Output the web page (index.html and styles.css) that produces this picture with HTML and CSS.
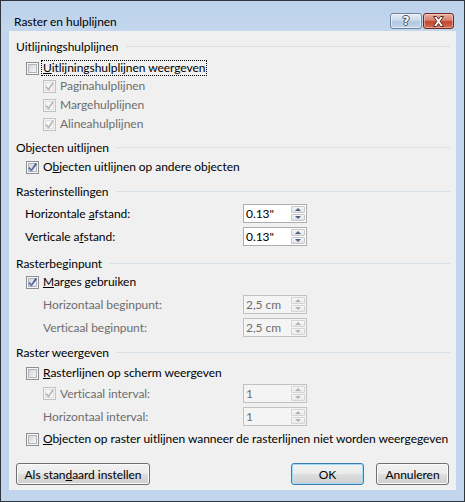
FILE: index.html
```html
<!DOCTYPE html>
<html lang="nl">
<head>
<meta charset="utf-8">
<title>Raster en hulplijnen</title>
<link rel="stylesheet" href="styles.css">
</head>
<body>
<div class="window">
  <div class="titlebar">
    <span class="title">Raster en hulplijnen</span>
    <div class="caption-buttons">
      <span class="cap-btn help">?</span>
      <span class="cap-btn close">
        <svg width="13" height="11" viewBox="0 0 13 11"><path d="M1.5 0.5 L4.6 0.5 L6.5 3.2 L8.4 0.5 L11.5 0.5 L8.2 5.3 L11.7 10.5 L8.5 10.5 L6.5 7.5 L4.5 10.5 L1.3 10.5 L4.8 5.3 Z" fill="#fff" stroke="#5a2a22" stroke-width="1" stroke-linejoin="round"/></svg>
      </span>
    </div>
  </div>
  <div class="client">
    <div class="group-head"><span>Uitlijningshulplijnen</span><i class="rule"></i></div>
    <div class="check ind1 mt4"><svg class="cb"><use href="#cb-off"/></svg><span class="lbl focus"><u>U</u>itlijningshulplijnen weergeven</span></div>
    <div class="check ind2 dis"><svg class="cb"><use href="#cb-dis-on"/></svg><span class="lbl">Paginahulplijnen</span></div>
    <div class="check ind2 dis mt1"><svg class="cb"><use href="#cb-dis-on"/></svg><span class="lbl">Margehulplijnen</span></div>
    <div class="check ind2 dis mt1"><svg class="cb"><use href="#cb-dis-on"/></svg><span class="lbl">Alineahulplijnen</span></div>

    <div class="group-head mt5"><span>Objecten uitlijnen</span><i class="rule"></i></div>
    <div class="check ind1 mt2"><svg class="cb"><use href="#cb-on"/></svg><span class="lbl">O<u>b</u>jecten uitlijnen op andere objecten</span></div>

    <div class="group-head mt6"><span>Rasterinstellingen</span><i class="rule"></i></div>
    <div class="field mt4">
      <span class="field-label"><span>Horizontale <u>a</u>fstand:</span></span>
      <div class="spin"><span class="spin-val">0.13"</span><span class="spin-btns"><i class="up"></i><i class="down"></i></span></div>
    </div>
    <div class="field mt4">
      <span class="field-label"><span>Verticale a<u>f</u>stand:</span></span>
      <div class="spin"><span class="spin-val">0.13"</span><span class="spin-btns"><i class="up"></i><i class="down"></i></span></div>
    </div>

    <div class="group-head mt8"><span>Rasterbeginpunt</span><i class="rule"></i></div>
    <div class="check ind1 mt1"><svg class="cb"><use href="#cb-on"/></svg><span class="lbl"><u>M</u>arges gebruiken</span></div>
    <div class="field sub dis mt4">
      <span class="field-label"><span>Horizontaal beginpunt:</span></span>
      <div class="spin"><span class="spin-val">2,5 cm</span><span class="spin-btns"><i class="up"></i><i class="down"></i></span></div>
    </div>
    <div class="field sub dis mt4">
      <span class="field-label"><span>Verticaal beginpunt:</span></span>
      <div class="spin"><span class="spin-val">2,5 cm</span><span class="spin-btns"><i class="up"></i><i class="down"></i></span></div>
    </div>

    <div class="group-head mt6"><span>Raster weergeven</span><i class="rule"></i></div>
    <div class="check ind1 mt3"><svg class="cb"><use href="#cb-off"/></svg><span class="lbl"><u>R</u>asterlijnen op scherm weergeven</span></div>
    <div class="field sub dis mt2">
      <span class="field-label"><svg class="cb"><use href="#cb-dis-on"/></svg><span class="lbl">Verticaal interval:</span></span>
      <div class="spin"><span class="spin-val">1</span><span class="spin-btns"><i class="up"></i><i class="down"></i></span></div>
    </div>
    <div class="field sub dis mt4">
      <span class="field-label"><span>Horizontaal interval:</span></span>
      <div class="spin"><span class="spin-val">1</span><span class="spin-btns"><i class="up"></i><i class="down"></i></span></div>
    </div>
    <div class="check ind1 mt4"><svg class="cb"><use href="#cb-off"/></svg><span class="lbl"><u>O</u>bjecten op raster uitlijnen wanneer de rasterlijnen niet worden weergegeven</span></div>

    <div class="buttons">
      <span class="btn wide">Als stan<u>d</u>aard instellen</span>
      <span class="btn default push">OK</span>
      <span class="btn">Annuleren</span>
    </div>
  </div>
</div>

<svg class="defs" width="0" height="0" aria-hidden="true">
  <defs>
    <linearGradient id="cbfill" x1="0" y1="0" x2="1" y2="1">
      <stop offset="0" stop-color="#cfd3d8"/>
      <stop offset="1" stop-color="#f8f8f8"/>
    </linearGradient>
    <linearGradient id="cbcheck" x1="0" y1="0" x2="0" y2="1">
      <stop offset="0" stop-color="#3b4f8f"/>
      <stop offset="1" stop-color="#6878b8"/>
    </linearGradient>
    <symbol id="cb-off" viewBox="0 0 13 13">
      <rect x="0.5" y="0.5" width="12" height="12" fill="#f6f6f6" stroke="#8e8f8f"/>
      <rect x="2.5" y="2.5" width="8" height="8" fill="url(#cbfill)" stroke="#b2b6bc"/>
    </symbol>
    <symbol id="cb-on" viewBox="0 0 13 13">
      <rect x="0.5" y="0.5" width="12" height="12" fill="#f6f6f6" stroke="#8e8f8f"/>
      <rect x="2.5" y="2.5" width="8" height="8" fill="url(#cbfill)" stroke="#b2b6bc"/>
      <path d="M3 6.6 L5.4 9.6 L10.2 2.6" fill="none" stroke="url(#cbcheck)" stroke-width="1.8" stroke-linejoin="round"/>
    </symbol>
    <symbol id="cb-dis-on" viewBox="0 0 13 13">
      <rect x="0.5" y="0.5" width="12" height="12" fill="#f4f4f4" stroke="#c2c2c2"/>
      <rect x="2.5" y="2.5" width="8" height="8" fill="#f4f4f4" stroke="#e0e0e0"/>
      <path d="M3 6.6 L5.4 9.6 L10.2 2.6" fill="none" stroke="#b0b0b0" stroke-width="1.5" stroke-linejoin="round"/>
    </symbol>
  </defs>
</svg>
</body>
</html>
```

FILE: styles.css
```css
html, body {
  margin: 0;
  padding: 0;
  background: #2b2f33;
}

body {
  font-family: Lato, "Noto Sans", sans-serif;
  font-size: 12px;
  letter-spacing: -0.05px;
  color: #000;
}

.window {
  box-sizing: border-box;
  width: 465px;
  height: 502px;
  border: 1px solid #30353b;
  background: #c1d5ec;
  padding: 0 8px 11px 8px;
  display: flex;
  flex-direction: column;
}

.titlebar {
  height: 30px;
  display: flex;
  justify-content: space-between;
  align-items: flex-start;
  margin: 0 -8px;
  padding: 0 10px 0 13px;
  background: linear-gradient(#bcd2ea, #c3d7ee);
}

.title {
  padding-top: 13px;
  line-height: 16px;
  font-size: 12px;
}

.caption-buttons {
  display: flex;
  gap: 1px;
  padding-top: 12px;
}

.cap-btn {
  box-sizing: border-box;
  height: 16px;
  border-radius: 3px;
  display: flex;
  align-items: center;
  justify-content: center;
}

.help {
  width: 32px;
  border: 1px solid #6f829b;
  background: linear-gradient(#e6eef8 0%, #cad9ec 45%, #b2c7e0 55%, #c3d6ec 100%);
  box-shadow: inset 0 0 0 1px rgba(255,255,255,0.55);
  color: #fff;
  font-family: "DejaVu Sans", sans-serif;
  font-weight: bold;
  font-size: 12px;
  line-height: 14px;
  text-shadow: 1px 0 0 #3d4e63, -1px 0 0 #3d4e63, 0 1px 0 #3d4e63, 0 -1px 0 #3d4e63;
}

.close {
  width: 31px;
  border: 1px solid #6e2a22;
  background: linear-gradient(#eab0a2 0%, #d9806c 45%, #c3442c 55%, #d4705a 100%);
  box-shadow: inset 0 0 0 1px rgba(255,220,210,0.5);
}

.close svg {
  display: block;
}

.client {
  flex: 1;
  background: #f0f0f0;
  padding: 6px 6px 0 7px;
  display: flex;
  flex-direction: column;
}

.group-head {
  height: 18px;
  display: flex;
  align-items: center;
  gap: 8px;
}

.rule {
  flex: 1;
  border-top: 1px solid #d5dfe5;
  margin-top: 1px;
}

.check {
  height: 18px;
  display: flex;
  align-items: center;
}

.ind1 { margin-left: 10px; }
.ind2 { margin-left: 27px; }

.cb {
  width: 13px;
  height: 13px;
  flex: none;
  display: block;
}

.lbl {
  margin-left: 2px;
  padding: 0 1px;
  border: 1px dotted transparent;
  line-height: 14px;
  white-space: nowrap;
}

.lbl.focus {
  border-color: #000;
}

.dis {
  color: #6d6d6d;
}

.mt1 { margin-top: 1px; }
.mt2 { margin-top: 2px; }
.mt3 { margin-top: 3px; }
.mt4 { margin-top: 4px; }
.mt5 { margin-top: 5px; }
.mt6 { margin-top: 6px; }
.mt8 { margin-top: 8px; }

.field {
  height: 19px;
  width: 291px;
  display: grid;
  grid-template-columns: 1fr 64px;
  align-items: center;
}

.field-label {
  padding-left: 9px;
  display: flex;
  align-items: center;
  white-space: nowrap;
}

.field.sub .field-label {
  padding-left: 27px;
}

.spin {
  box-sizing: border-box;
  height: 19px;
  border: 1px solid #abadb3;
  background: #fff;
  display: flex;
}

.spin-val {
  flex: 1;
  padding-left: 2px;
  line-height: 17px;
}

.spin-btns {
  width: 14px;
  display: flex;
  flex-direction: column;
  gap: 1px;
  padding: 1px 1px 1px 0;
}

.spin-btns i {
  flex: 1;
  box-sizing: border-box;
  border: 1px solid #c6c8cc;
  border-radius: 1px;
  background: linear-gradient(#f6f6f6, #e2e3e6);
  display: flex;
  align-items: center;
  justify-content: center;
}

.spin-btns i::before {
  content: "";
  width: 0;
  height: 0;
  border-left: 3px solid transparent;
  border-right: 3px solid transparent;
}

.spin-btns .up::before {
  border-bottom: 3px solid #4d6185;
}

.spin-btns .down::before {
  border-top: 3px solid #4d6185;
}

.dis .spin {
  border-color: #bfc1c5;
  background: #f4f4f4;
}

.dis .spin-btns i {
  border-color: #d3d4d6;
  background: linear-gradient(#f7f7f7, #eaeaea);
}

.dis .spin-btns .up::before {
  border-bottom-color: #b2b2b2;
}

.dis .spin-btns .down::before {
  border-top-color: #b2b2b2;
}

.buttons {
  margin-top: 15px;
  height: 22px;
  display: flex;
  gap: 12px;
  padding-right: 1px;
}

.btn {
  box-sizing: border-box;
  width: 73px;
  height: 22px;
  border: 1px solid #707070;
  border-radius: 3px;
  background: linear-gradient(#f2f2f2 0%, #ebebeb 48%, #dddddd 52%, #cfcfcf 100%);
  box-shadow: inset 0 0 0 1px #fbfbfb;
  display: flex;
  align-items: center;
  justify-content: center;
  white-space: nowrap;
}

.btn.wide {
  width: 134px;
}

.btn.default {
  border-color: #3c7fb1;
  box-shadow: inset 0 0 0 1px #9fdcf7;
}

.push {
  margin-left: auto;
}

.defs {
  width: 0;
  height: 0;
  overflow: hidden;
  display: block;
}
```
